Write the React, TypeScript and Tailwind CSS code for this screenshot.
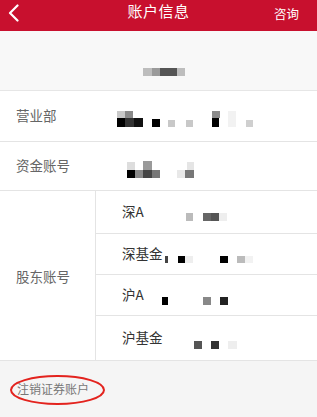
import React from "react";

type Cell = [number, number, number, number, string];

const FONT = { fontFamily: '"Noto Sans CJK SC", "Noto Sans", sans-serif' };

function Mosaic({ cells, w, h, ox, oy }: { cells: Cell[]; w: number; h: number; ox: number; oy: number }) {
  return (
    <svg width={w} height={h} viewBox={`0 0 ${w} ${h}`} className="flex-none block">
      {cells.map(([x1, x2, y1, y2, c], i) => (
        <rect key={i} x={x1 - ox} y={y1 - oy} width={x2 - x1} height={y2 - y1} fill={c} />
      ))}
    </svg>
  );
}

const topCells: Cell[] = [
  [143, 152, 68, 76, "#bdbdbd"],
  [152, 160, 68, 76, "#9a9a9a"],
  [160, 177, 68, 76, "#555555"],
  [177, 185, 68, 76, "#bdbdbd"],
];

const yybCells: Cell[] = [
  [117, 125, 111, 118, "#c8c8c8"],
  [125, 133, 111, 118, "#8a8a8a"],
  [212, 220, 111, 118, "#8a8a8a"],
  [228, 236, 111, 127, "#f2f2f2"],
  [117, 125, 118, 127, "#000000"],
  [125, 134, 118, 127, "#333333"],
  [134, 143, 118, 127, "#111111"],
  [152, 160, 119, 127, "#000000"],
  [168, 175, 120, 127, "#c8c8c8"],
  [186, 193, 120, 127, "#c8c8c8"],
  [212, 219, 118, 127, "#000000"],
  [246, 253, 120, 127, "#cfcfcf"],
];

const zjCells: Cell[] = [
  [127, 135, 162, 170, "#dddddd"],
  [143, 152, 161, 170, "#9a9a9a"],
  [187, 194, 162, 170, "#e5e5e5"],
  [127, 135, 170, 178, "#000000"],
  [135, 143, 170, 178, "#888888"],
  [143, 152, 170, 178, "#444444"],
  [152, 160, 170, 178, "#777777"],
  [177, 185, 170, 178, "#e8e8e8"],
  [185, 194, 170, 178, "#777777"],
];

const szaCells: Cell[] = [
  [186, 193, 213, 221, "#bbbbbb"],
  [203, 211, 213, 221, "#666666"],
  [211, 219, 213, 221, "#555555"],
  [219, 227, 213, 221, "#eeeeee"],
];

const szjCells: Cell[] = [
  [165, 168, 256, 263, "#444444"],
  [178, 185, 256, 263, "#000000"],
  [185, 193, 256, 263, "#eeeeee"],
  [220, 228, 256, 263, "#000000"],
  [237, 245, 256, 263, "#bbbbbb"],
  [245, 253, 256, 263, "#f2f2f2"],
];

const haCells: Cell[] = [
  [149, 152, 297, 305, "#cfcfcf"],
  [160, 168, 297, 305, "#000000"],
  [203, 211, 297, 305, "#888888"],
  [220, 228, 297, 305, "#222222"],
];

const hjCells: Cell[] = [
  [194, 202, 341, 349, "#555555"],
  [211, 219, 341, 349, "#333333"],
  [228, 237, 341, 349, "#eeeeee"],
];

function SubRow({
  label,
  cells,
  top,
  h,
  last,
}: {
  label: string;
  cells: Cell[];
  top: number;
  h: number;
  last?: boolean;
}) {
  return (
    <div
      className={`flex items-center pl-[26px] bg-white ${last ? "" : "border-b border-[#e4e4e4]"}`}
      style={{ height: h + (last ? 0 : 1) }}
    >
      <div className="w-[40px] flex-none text-[13.5px] text-[#333] leading-none whitespace-nowrap">{label}</div>
      <Mosaic cells={cells} w={155} h={h} ox={162} oy={top} />
    </div>
  );
}

export default function App() {
  return (
    <div className="w-[317px] h-[417px] bg-[#f5f5f5] overflow-hidden" style={FONT}>
      {/* header */}
      <div className="h-[31px] bg-[#c8102e] grid grid-cols-[1fr_auto_1fr] text-white">
        <div className="pl-[7px] pt-[4px]">
          <svg width="13" height="18" viewBox="0 0 13 18">
            <path d="M10.5 1.5 L3 9 L10.5 16.5" fill="none" stroke="#fff" strokeWidth="2.2" strokeLinecap="round" strokeLinejoin="round" />
          </svg>
        </div>
        <div className="text-[15px] leading-none pt-[3px] tracking-[0.5px]">账户信息</div>
        <div className="flex justify-end pr-[18px] pt-[8px] text-[12.5px] leading-none">咨询</div>
      </div>

      {/* top section */}
      <div className="h-[60px] bg-[#f8f8f8] border-b border-[#e6e6e6] flex">
        <Mosaic cells={topCells} w={317} h={59} ox={0} oy={31} />
      </div>

      {/* 营业部 */}
      <div className="h-[51px] bg-white border-b border-[#e4e4e4] flex items-center pl-4">
        <div className="w-[101px] flex-none text-[13.5px] text-[#666] leading-none">营业部</div>
        <Mosaic cells={yybCells} w={200} h={50} ox={117} oy={91} />
      </div>

      {/* 资金账号 */}
      <div className="h-[49px] bg-white border-b border-[#e4e4e4] flex items-center pl-4">
        <div className="w-[101px] flex-none text-[13.5px] text-[#666] leading-none">资金账号</div>
        <Mosaic cells={zjCells} w={200} h={48} ox={117} oy={142} />
      </div>

      {/* 股东账号 */}
      <div className="h-[170px] bg-white border-b border-[#e4e4e4] flex">
        <div className="w-[96px] flex-none border-r border-[#e4e4e4] flex items-center pl-4 pt-[3px]">
          <div className="text-[13.5px] text-[#666] leading-none whitespace-nowrap">股东账号</div>
        </div>
        <div className="flex-1 flex flex-col">
          <SubRow label="深A" cells={szaCells} top={191} h={42} />
          <SubRow label="深基金" cells={szjCells} top={234} h={40} />
          <SubRow label="沪A" cells={haCells} top={275} h={40} />
          <SubRow label="沪基金" cells={hjCells} top={316} h={44} last />
        </div>
      </div>

      {/* bottom */}
      <div className="pl-[17px] pt-[14px]">
        <div className="relative inline-block text-[12px] text-[#777] leading-none">
          注销证券账户
          <svg
            className="absolute left-[-8px] top-[-9px] pointer-events-none"
            width="97"
            height="32"
            viewBox="0 0 97 32"
          >
            <ellipse cx="48.5" cy="16" rx="46.5" ry="14" fill="none" stroke="#e3231e" strokeWidth="2" />
          </svg>
        </div>
      </div>
    </div>
  );
}
